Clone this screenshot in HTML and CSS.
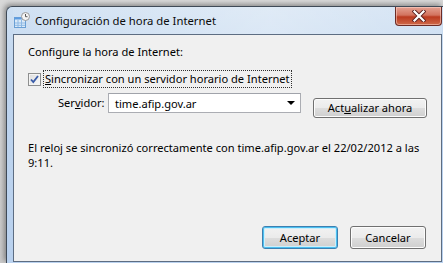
FILE: index.html
```html
<!DOCTYPE html>
<html lang="es">
  <head>
    <meta charset="UTF-8" />
    <title>Configuración de hora de Internet</title>
    <link rel="stylesheet" href="styles.css">
  </head>
  <body>
    <div class="window">
      <div class="titlebar">
        <svg class="title-icon" width="16" height="16" viewBox="0 0 16 16">
          <rect x="0.5" y="5.5" width="11" height="10" fill="#dbeaf8" stroke="#6a9fd4"/>
          <rect x="0.5" y="5.5" width="11" height="2" fill="#5d9be0"/>
          <path d="M4 8v7M7.5 8v7M1 11h10M1 13.3h10" stroke="#8db8e4" stroke-width="1"/>
          <circle cx="11.5" cy="4.5" r="4" fill="#f4f4f4" stroke="#9a9a9a"/>
          <path d="M11.5 2v2.7h2" stroke="#555" stroke-width="1" fill="none"/>
        </svg>
        <span class="title-text">Configuración de hora de Internet</span>
        <div class="close-btn">
          <svg width="14" height="12" viewBox="0 0 14 12">
            <path d="M2.5 1.5l9 9M11.5 1.5l-9 9" stroke="#5a2020" stroke-width="4" stroke-linecap="square"/>
            <path d="M2.5 1.5l9 9M11.5 1.5l-9 9" stroke="#ffffff" stroke-width="2.2" stroke-linecap="square"/>
          </svg>
        </div>
      </div>

      <div class="client">
        <p class="intro">Configure la hora de Internet:</p>

        <div class="sync-row">
          <span class="checkbox">
            <svg width="11" height="11" viewBox="0 0 11 11">
              <path d="M2 5.5l2.3 2.6L9 2" stroke="#3a5ca8" stroke-width="1.8" fill="none"/>
            </svg>
          </span>
          <span class="focus-label"><u>S</u>incronizar con un servidor horario de Internet</span>
        </div>

        <div class="server-row">
          <span class="server-label">Ser<u>v</u>idor:</span>
          <div class="combo">
            <span>time.afip.gov.ar</span>
            <span class="arrow"></span>
          </div>
          <button class="btn btn-update">Act<u>u</u>alizar ahora</button>
        </div>

        <p class="status">El reloj se sincronizó correctamente con time.afip.gov.ar el 22/02/2012 a las<br>9:11.</p>

        <div class="actions">
          <button class="btn btn-default">Aceptar</button>
          <button class="btn">Cancelar</button>
        </div>
      </div>
    </div>
  </body>
</html>
```

FILE: styles.css
```css
body {
  margin: 0;
  width: 443px;
  height: 263px;
  overflow: hidden;
  background: linear-gradient(to bottom, #d9d9d9, #c9c9c9);
  font-family: "Noto Sans", "Open Sans", sans-serif;
  font-size: 11.1px;
  color: #000;
}
.window {
  margin: 6px 0 0 6px;
  width: 429px;
  padding: 0 1px 1px 6px;
  border: 1px solid #3f4a57;
  border-right: none;
  border-bottom: none;
  border-radius: 6px 0 0 0;
  background: linear-gradient(to bottom, #cfe0f2 0%, #bed4ee 30%, #b9d1ee 100%);
  box-shadow: -2px -2px 5px rgba(0, 0, 0, 0.35);
}
.titlebar {
  display: flex;
  align-items: flex-start;
  height: 27px;
  background: linear-gradient(to right, rgba(255, 255, 255, 0.05), rgba(255, 255, 255, 0.35) 60%, rgba(255, 255, 255, 0.15));
}
.title-icon {
  margin: 5px 0 0 1px;
}
.title-text {
  margin: 6px 0 0 5px;
  line-height: 16px;
  font-size: 11.3px;
  color: #0b0b0b;
}
.close-btn {
  margin-left: auto;
  width: 45px;
  height: 18px;
  display: flex;
  align-items: center;
  justify-content: center;
  border: 1px solid #6c2b25;
  border-top: none;
  border-radius: 0 0 4px 4px;
  background: linear-gradient(to bottom, #e5a192 0%, #d2735f 45%, #bb3a20 55%, #cf6a4a 100%);
  box-shadow: inset 0 0 0 1px rgba(255, 220, 210, 0.5);
}
.client {
  display: flex;
  flex-direction: column;
  box-sizing: border-box;
  width: 429px;
  height: 228px;
  border: 1px solid #5d6d82;
  background: #f0f0f0;
  padding: 0 14px 12px 14px;
}
.intro {
  margin: 9px 0 0 0;
  line-height: 15px;
}
.sync-row {
  display: flex;
  align-items: center;
  height: 18px;
  margin-top: 11px;
}
.checkbox {
  width: 11px;
  height: 11px;
  border: 1px solid #8e8f8f;
  background: linear-gradient(to bottom right, #dcdcdc, #fafafa);
  box-shadow: inset 0 0 0 1px #f4f4f4;
  display: flex;
  margin-right: 2px;
}
.focus-label {
  border: 1px dotted #303030;
  padding: 0 1px;
  line-height: 16px;
}
.server-row {
  display: flex;
  align-items: flex-start;
  margin-top: 5px;
}
.server-label {
  width: 50px;
  margin-left: 30px;
  line-height: 20px;
}
.combo {
  width: 193px;
  height: 20px;
  box-sizing: border-box;
  border: 1px solid #abadb3;
  border-top-color: #a0a3aa;
  background: #fff;
  display: flex;
  align-items: center;
  padding: 0 5px 0 6px;
}
.arrow {
  margin-left: auto;
  width: 0;
  height: 0;
  border-left: 4px solid transparent;
  border-right: 4px solid transparent;
  border-top: 4px solid #000;
}
.btn {
  font-family: inherit;
  font-size: 11.1px;
  color: #000;
  width: 76px;
  height: 23px;
  padding: 0;
  border: 1px solid #707070;
  border-radius: 3px;
  background: linear-gradient(to bottom, #f2f2f2 0%, #ebebeb 50%, #dddddd 51%, #cfcfcf 100%);
  box-shadow: inset 0 0 0 1px #fcfcfc;
}
.btn-update {
  width: 114px;
  height: 20px;
  margin: 5px 0 0 12px;
  line-height: 16px;
}
.status {
  margin: 22px 0 0 0;
  line-height: 15px;
  white-space: nowrap;
}
.actions {
  margin-top: auto;
  display: flex;
  justify-content: flex-end;
  gap: 12px;
  padding-right: 1px;
}
.btn-default {
  border-color: #3c7fb1;
  box-shadow: inset 0 0 0 1px #4cc0f0, inset 0 0 0 2px #cdeefb;
}
```
